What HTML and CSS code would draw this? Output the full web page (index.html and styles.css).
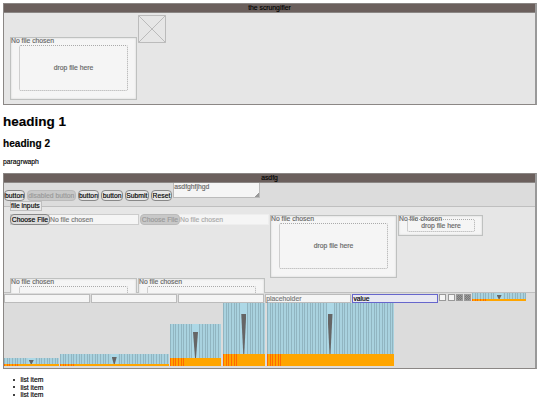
FILE: index.html
```html
<!DOCTYPE html>
<html lang="en">
<head>
    <meta charset="UTF-8">
    <title>the scrungifier</title>
    <link rel="stylesheet" href="styles.css">
</head>
<body>
    <section class="window first">
        <div class="titlebar">the scrungifier</div>
        <div class="content">
            <div class="drop"><span class="status">No file chosen</span><div class="target">drop file here</div></div>
            <svg class="placeholder-img" viewBox="0 0 28 28"><path d="M.5.5h27v27H.5zM.5.5l27 27M27.5.5l-27 27"/></svg>
        </div>
    </section>

    <h1>heading 1</h1>
    <h2>heading 2</h2>
    <p>paragrwaph</p>

    <section class="window second">
        <div class="titlebar">asdfg</div>
        <div class="buttons">
            <button class="w21">button</button>
            <button class="w49" disabled>disabled button</button>
            <button class="w22">button</button>
            <button class="w22">button</button>
            <button class="w24">Submit</button>
            <button class="w22">Reset</button>
            <div class="textarea">asdfghfjhgd</div>
        </div>
        <div class="fieldset">
            <div class="legend">file inputs</div>
            <div class="files">
                <div class="file"><button>Choose File</button><span>No file chosen</span></div>
                <div class="file disabled"><button disabled>Choose File</button><span>No file chosen</span></div>
                <div class="drop"><span class="status">No file chosen</span><div class="target">drop file here</div></div>
                <div class="drop small"><span class="status">No file chosen</span><div class="target">drop file here</div></div>
            </div>
            <div class="files more">
                <div class="drop"><span class="status">No file chosen</span><div class="target"></div></div>
                <div class="drop"><span class="status">No file chosen</span><div class="target"></div></div>
            </div>
        </div>
        <div class="inputs">
            <div class="text"></div>
            <div class="text"></div>
            <div class="text"></div>
            <div class="text hint">placeholder</div>
            <div class="text focus">value</div>
            <i class="check"></i>
            <i class="check"></i>
            <i class="check on"></i>
            <i class="check on"></i>
            <div class="range r0"><i class="thumb"></i></div>
        </div>
        <div class="ranges">
            <div class="range r1"><i class="thumb"></i></div>
            <div class="range r2"><i class="thumb"></i></div>
            <div class="range r3"><i class="thumb"></i></div>
            <div class="range r4"><i class="thumb"></i></div>
            <div class="range r5"><i class="thumb"></i></div>
        </div>
    </section>

    <ul>
        <li>list item</li>
        <li>list item</li>
        <li>list item</li>
    </ul>
</body>
</html>
```
FILE: styles.css
```css
* {
    box-sizing: border-box;
}
body {
    margin: 0;
    padding: 3px 3px 0;
    height: 405px;
    overflow: hidden;
    background: #fff;
    color: #000;
    font: 6.8px/8px "Liberation Sans", Arial, sans-serif;
    -webkit-text-stroke: 0.15px;
}
.window {
    width: 534px;
    border: 1px solid #8b8785;
    border-right: 2px solid #999;
    overflow: hidden;
}
.first {
    height: 102px;
    background: #e6e6e6;
}
.second {
    height: 196px;
    background: #dcdcdc;
}
.titlebar {
    height: 9px;
    background: #6b605d;
    border-bottom: 1px solid #8b8785;
    text-align: center;
    line-height: 7px;
}
.first .titlebar {
    margin-bottom: 2px;
}
.content {
    display: flex;
    gap: 1px;
    padding-left: 6px;
}
.content .drop {
    margin-top: 22px;
}
.placeholder-img {
    width: 28px;
    height: 28px;
    fill: none;
    stroke: #bbb;
    stroke-width: 1;
}
.drop {
    flex: none;
    width: 127px;
    height: 63px;
    padding: 7px 8px;
    border: 1px solid #bfc1c0;
    box-shadow: inset 0 0 2px #ccc;
    background: #f5f5f5;
    color: #666;
    position: relative;
}
.status {
    position: absolute;
    left: 0;
    top: -1px;
}
.target {
    height: 46px;
    border: 1px dotted #aaa;
    border-radius: 2px;
    display: flex;
    align-items: center;
    justify-content: center;
}
.drop.small {
    width: 85px;
    height: 21px;
    padding: 3px 8px;
}
.small .target {
    width: 68px;
    height: 13px;
}
h1 {
    margin: 9px 0 0;
    font-size: 13.5px;
    line-height: 16px;
}
h2 {
    margin: 8px 0 0;
    font-size: 10.1px;
    line-height: 12px;
}
p {
    margin: 8px 0 7px;
    line-height: 8px;
}
.buttons {
    display: flex;
    align-items: flex-end;
    gap: 1.8px;
    height: 18px;
}
button {
    font: inherit;
    height: 11px;
    padding: 0;
    border: 1px solid #888;
    border-radius: 4px;
    background: #e6e6e6;
    color: #000;
    white-space: nowrap;
    display: flex;
    align-items: center;
    justify-content: center;
}
button:disabled {
    background: #c8c8c8;
    border-color: #bbb;
    color: #999;
}
.w21 { width: 21px; }
.w22 { width: 21.8px; }
.w24 { width: 24px; }
.w49 { width: 49px; }
.textarea {
    align-self: flex-start;
    width: 87px;
    height: 15px;
    margin-left: -1px;
    border: 1px solid #bbb;
    border-top: 0;
    background: linear-gradient(135deg, transparent 50%, #999 50%) right bottom / 4px 4px no-repeat #f5f5f5;
    color: #666;
    line-height: 7px;
}
.fieldset {
    height: 87px;
    margin-top: 5px;
    padding-left: 6px;
    border-top: 1px solid #bfbfbf;
    border-bottom: 1px solid #bfbfbf;
    background: #e6e6e6;
}
.legend {
    position: relative;
    width: 32px;
    height: 10px;
    margin-top: -6px;
    border: 1px solid #bfbfbf;
    background: #e9e9e9;
    line-height: 8px;
}
.files {
    display: flex;
    gap: 1px;
    height: 67px;
    padding-top: 4px;
}
.files.more {
    height: 15px;
    padding-top: 0;
    overflow: hidden;
}
.file {
    display: flex;
    width: 129px;
    height: 11px;
    margin-top: -1px;
    background: #f5f5f5;
    border: 1px solid #ccc;
    color: #777;
}
.file button {
    width: 40px;
    margin: -1px 0 0 -1px;
    background: #dcdcdc;
}
.file span {
    line-height: 9px;
}
.file.disabled {
    border-color: #eee;
    color: #aaa;
}
.file.disabled button {
    background: #c8c8c8;
}
.inputs {
    display: flex;
    align-items: flex-start;
    gap: 1.1px;
    height: 10px;
}
.text {
    width: 86px;
    height: 9px;
    margin-top: 1px;
    border: 1px solid #bbb;
    background: #f5f5f5;
    line-height: 7px;
}
.hint {
    color: #777;
}
.focus {
    border-color: #6666cc;
    background: #e8e8f2;
}
.check {
    width: 7px;
    height: 7px;
    margin: 1px 0 0;
    border: 1px solid #999;
    background: #f5f5f5;
}
.on {
    background: conic-gradient(#777 25%, #999 0 50%, #777 0 75%, #999 0) 0 0 / 2px 2px;
}
.ranges {
    display: flex;
    align-items: flex-end;
    gap: 1.5px;
    height: 63px;
}
.range {
    position: relative;
    --track: 8px;
    --thumb: 7px;
    --height: 26px;
    background:
        repeating-linear-gradient(90deg, #ff6a00 0 1px, #ffa500 1px 2.67px) left bottom / 14px var(--track) no-repeat,
        linear-gradient(#ffa500, #ffa500) left bottom / 100% var(--track) no-repeat,
        linear-gradient(#add8e6, #add8e6) center top / var(--thumb) 100% no-repeat,
        repeating-linear-gradient(90deg, #91b5c1 0 1px, #a9d2df 1px 2.67px);
}
.thumb {
    position: absolute;
    left: calc(50% - 2.5px);
    bottom: var(--track);
    width: 5px;
    height: var(--height);
    background: #666;
    clip-path: polygon(0 0, 100% 0, 60% 100%, 40% 100%);
}
.r0, .r1 { width: 54.5px; height: 8px; --track: 2px; --height: 4px; }
.r2 { width: 108.5px; height: 12px; --track: 2px; --height: 7px; }
.r3 { width: 51px; height: 42px; --height: 26px; }
.r4 { width: 42.5px; height: 63px; --track: 12px; --height: 40px; }
.r5 { width: 127px; height: 63px; --track: 12px; --height: 40px; }
ul {
    margin: 7px 0 0;
    padding: 0 0 0 10px;
    list-style: none;
}
/* small round bullet, tighter than the native marker */
li {
    display: flex;
    align-items: center;
    gap: 5px;
    line-height: 7.5px;
}
li::before {
    content: "";
    width: 2.4px;
    height: 2.4px;
    border-radius: 50%;
    background: #000;
}
```
